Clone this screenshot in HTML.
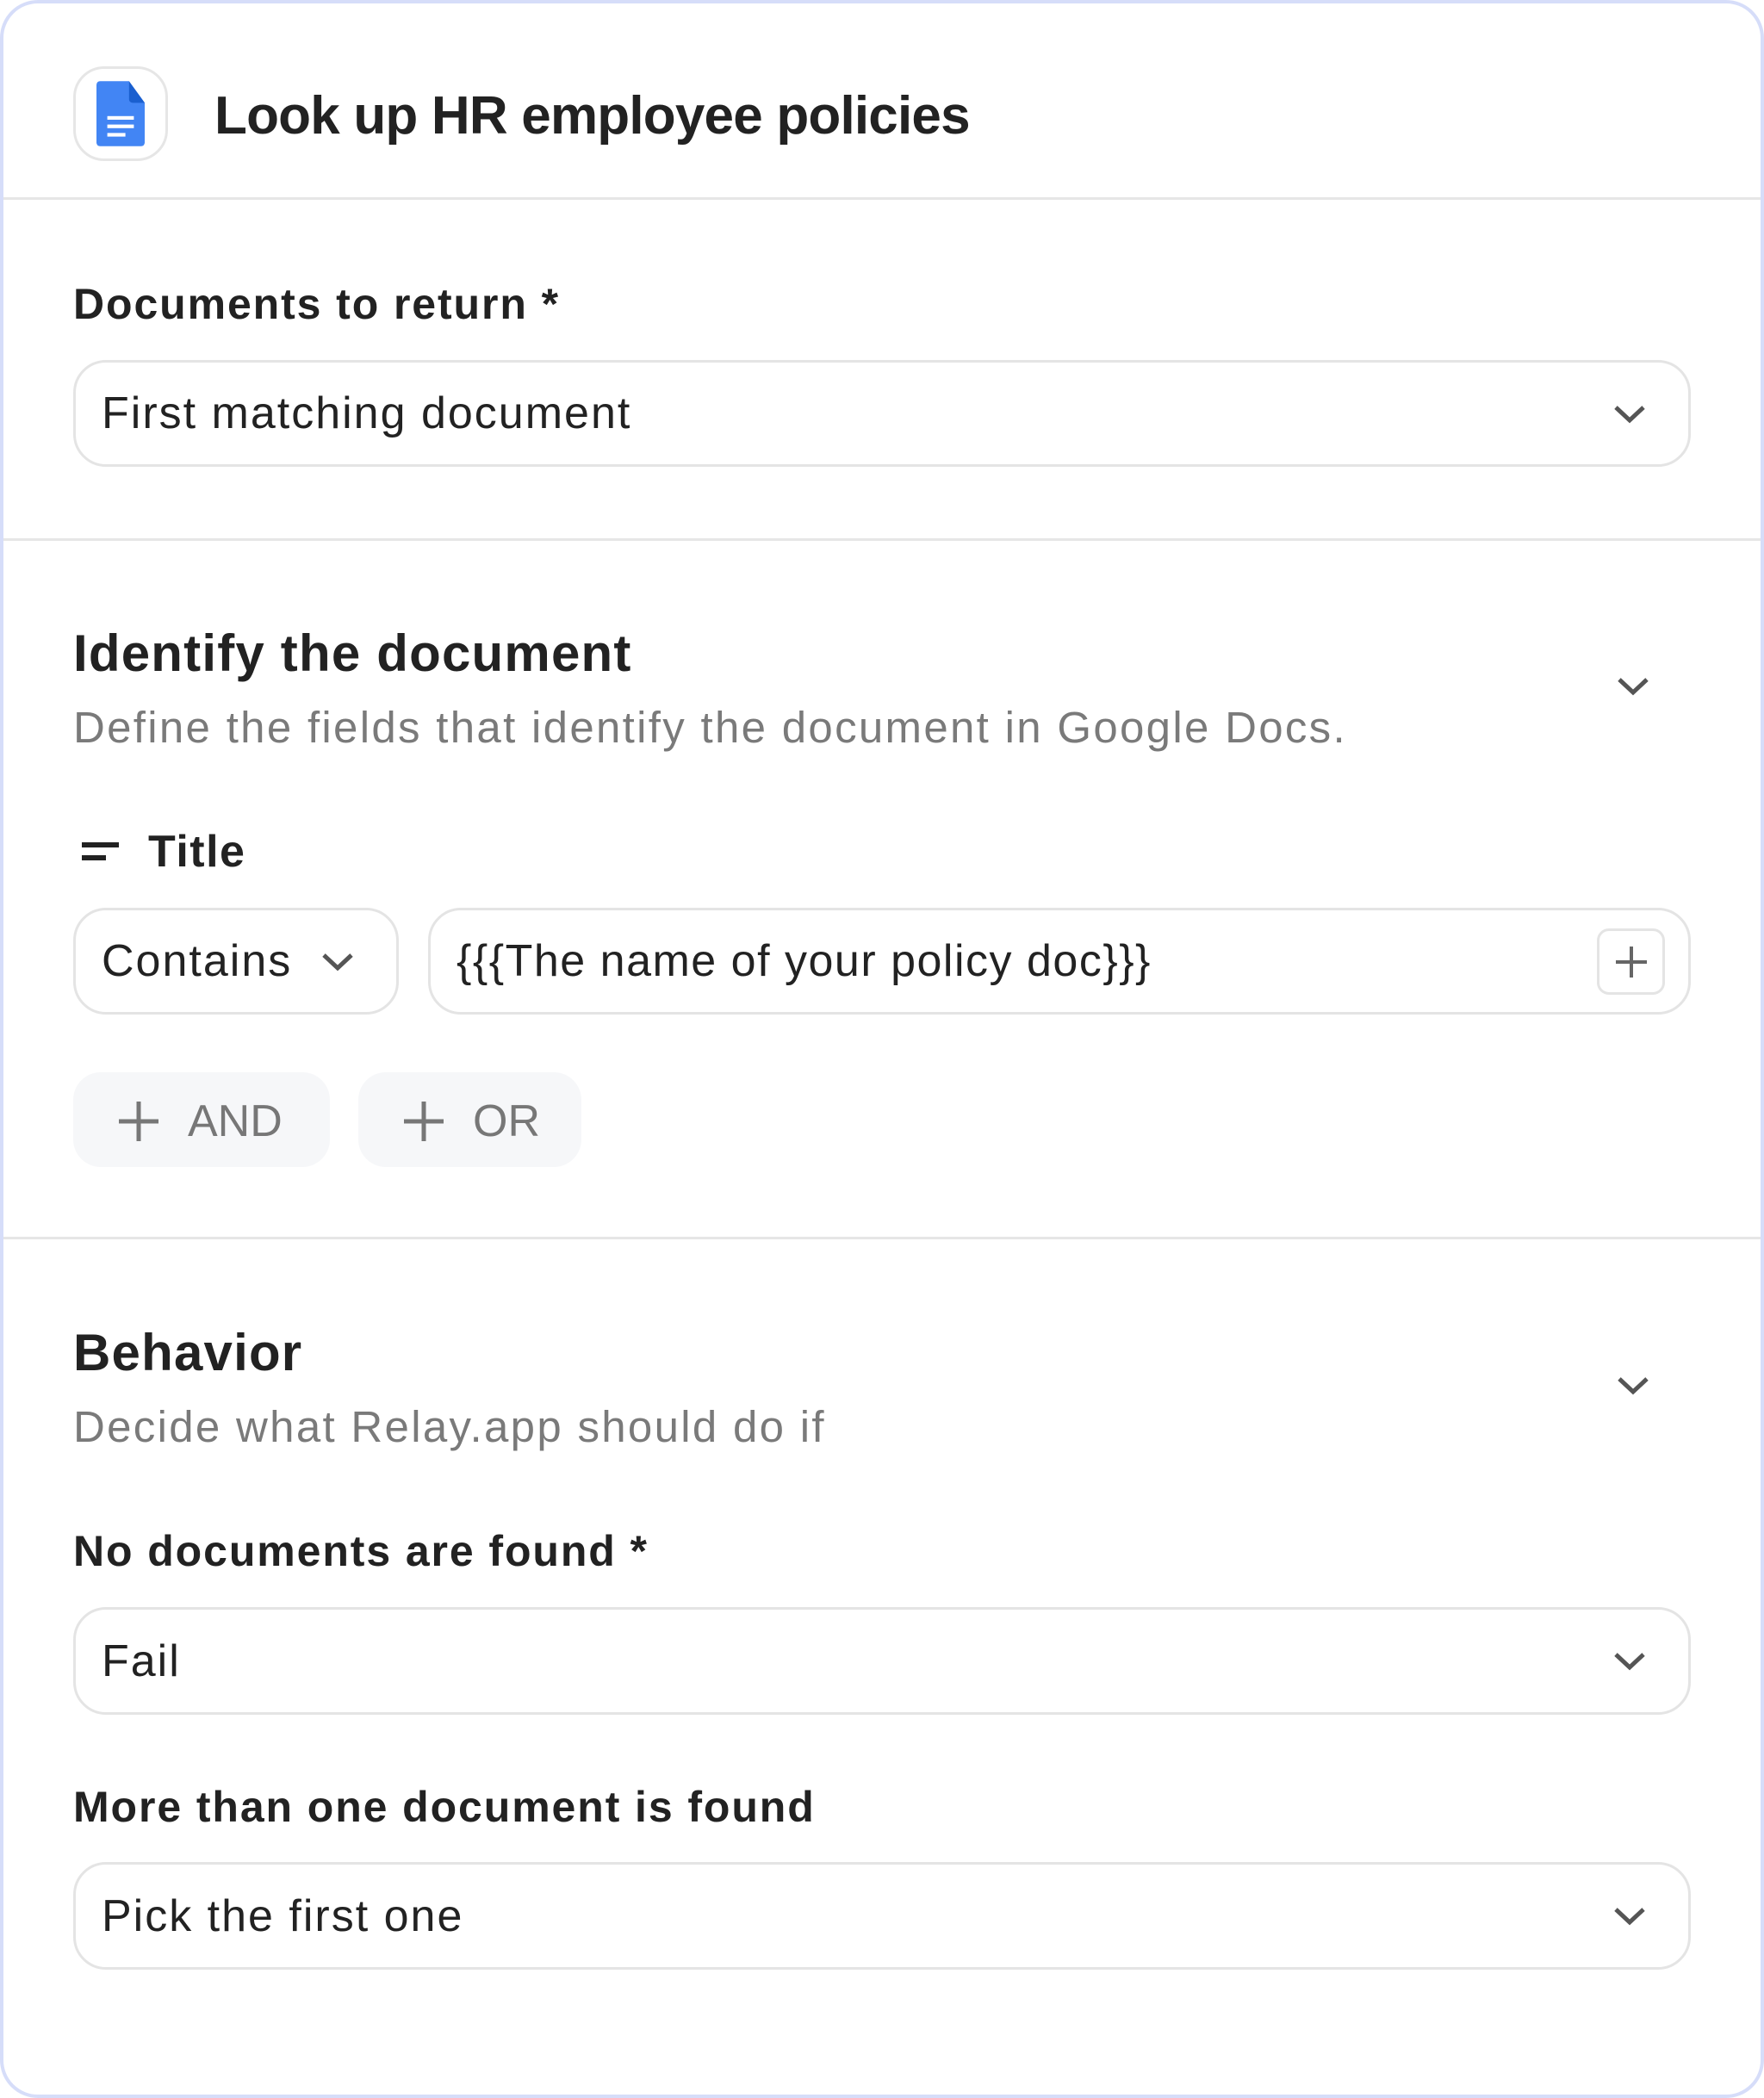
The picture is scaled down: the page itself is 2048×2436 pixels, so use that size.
<!DOCTYPE html>
<html><head><meta charset="utf-8"><style>
*{box-sizing:border-box;margin:0;padding:0}
html,body{width:2048px;height:2436px;background:#fff;overflow:hidden}
body{font-family:"Liberation Sans",sans-serif;color:#222;position:relative}
.card{position:absolute;left:0;top:0;width:2048px;height:2436px;border:4px solid #d6ddf9;border-radius:44px;background:#fff}
.abs{position:absolute}
.hr{position:absolute;left:4px;right:4px;height:3px;background:#e6e6e6}
.lbl{position:absolute;left:85px;font-size:50px;font-weight:bold;color:#222;line-height:1;letter-spacing:1.9px}
.h2{position:absolute;left:85px;font-size:60px;font-weight:bold;line-height:1;letter-spacing:1.2px}
.sub{position:absolute;left:85px;font-size:51px;color:#7a7a7a;line-height:1;letter-spacing:2.3px}
.box{position:absolute;border:3px solid #e4e4e4;border-radius:38px;background:#fff}
.box .t{position:absolute;left:30px;top:50%;transform:translateY(-50%);font-size:52px;color:#222;white-space:nowrap;letter-spacing:2px}
.chev{position:absolute}
.btn{position:absolute;background:#f6f7f9;border-radius:32px;color:#777;font-size:52px}
</style></head><body>
<div class="card"></div>
<div class="abs" style="left:85px;top:77px;width:110px;height:110px;border:3px solid #e6e6e6;border-radius:36px"></div>
<svg class="abs" style="left:112px;top:94px" width="56" height="76" viewBox="0 0 40 54">
<path d="M3 0H27L40 18V51a3 3 0 0 1-3 3H3a3 3 0 0 1-3-3V3a3 3 0 0 1 3-3z" fill="#4285f4"/>
<path d="M27 0V15a3 3 0 0 0 3 3H40z" fill="#1a5fcf"/>
<rect x="9" y="29" width="22" height="3" fill="#fff"/><rect x="9" y="36" width="22" height="3" fill="#fff"/><rect x="9" y="43" width="15" height="3" fill="#fff"/>
</svg>
<div class="abs" style="left:249px;top:104px;font-size:62px;font-weight:bold;line-height:1;letter-spacing:-0.8px">Look up HR employee policies</div>
<div class="hr" style="top:229px"></div>

<div class="lbl" style="top:328px">Documents to return *</div>
<div class="box" style="left:85px;top:418px;width:1878px;height:124px"><div class="t">First matching document</div></div>
<svg class="chev" style="left:1872px;top:468px" width="40" height="26" viewBox="0 0 40 26"><path d="M4 5l16 15L36 5" fill="none" stroke="#555" stroke-width="5"/></svg>
<div class="hr" style="top:625px"></div>

<div class="h2" style="top:729px">Identify the document</div>
<div class="sub" style="top:819px">Define the fields that identify the document in Google Docs.</div>
<svg class="chev" style="left:1876px;top:784px" width="40" height="26" viewBox="0 0 40 26"><path d="M4 5l16 15L36 5" fill="none" stroke="#555" stroke-width="5"/></svg>
<div class="abs" style="left:95px;top:978px;width:43px;height:6px;background:#222"></div>
<div class="abs" style="left:95px;top:993px;width:28px;height:6px;background:#222"></div>
<div class="abs" style="left:172px;top:963px;font-size:52px;font-weight:bold;line-height:1;letter-spacing:1.5px">Title</div>
<div class="box" style="left:85px;top:1054px;width:378px;height:124px"><div class="t">Contains</div></div>
<svg class="chev" style="left:372px;top:1104px" width="40" height="26" viewBox="0 0 40 26"><path d="M4 5l16 15L36 5" fill="none" stroke="#555" stroke-width="5"/></svg>
<div class="box" style="left:497px;top:1054px;width:1466px;height:124px"><div class="t" style="letter-spacing:1.5px">{{{The name of your policy doc}}}</div></div>
<div class="abs" style="left:1854px;top:1078px;width:79px;height:77px;border:3px solid #e4e4e4;border-radius:14px"></div>
<svg class="abs" style="left:1872px;top:1095px" width="44" height="44" viewBox="0 0 44 44"><path d="M22 4V40M4 22H40" stroke="#666" stroke-width="4"/></svg>
<div class="btn" style="left:85px;top:1245px;width:298px;height:110px"></div>
<svg class="abs" style="left:136px;top:1277px" width="50" height="50" viewBox="0 0 50 50"><path d="M25 2V48M2 25H48" stroke="#777" stroke-width="5"/></svg>
<div class="abs" style="left:218px;top:1276px;font-size:52px;color:#777;line-height:1">AND</div>
<div class="btn" style="left:416px;top:1245px;width:259px;height:110px"></div>
<svg class="abs" style="left:467px;top:1277px" width="50" height="50" viewBox="0 0 50 50"><path d="M25 2V48M2 25H48" stroke="#777" stroke-width="5"/></svg>
<div class="abs" style="left:549px;top:1276px;font-size:52px;color:#777;line-height:1">OR</div>
<div class="hr" style="top:1436px"></div>

<div class="h2" style="top:1541px">Behavior</div>
<div class="sub" style="top:1631px">Decide what Relay.app should do if</div>
<svg class="chev" style="left:1876px;top:1596px" width="40" height="26" viewBox="0 0 40 26"><path d="M4 5l16 15L36 5" fill="none" stroke="#555" stroke-width="5"/></svg>
<div class="lbl" style="top:1776px">No documents are found *</div>
<div class="box" style="left:85px;top:1866px;width:1878px;height:125px"><div class="t">Fail</div></div>
<svg class="chev" style="left:1872px;top:1916px" width="40" height="26" viewBox="0 0 40 26"><path d="M4 5l16 15L36 5" fill="none" stroke="#555" stroke-width="5"/></svg>
<div class="lbl" style="top:2073px">More than one document is found</div>
<div class="box" style="left:85px;top:2162px;width:1878px;height:125px"><div class="t">Pick the first one</div></div>
<svg class="chev" style="left:1872px;top:2212px" width="40" height="26" viewBox="0 0 40 26"><path d="M4 5l16 15L36 5" fill="none" stroke="#555" stroke-width="5"/></svg>
</body></html>
